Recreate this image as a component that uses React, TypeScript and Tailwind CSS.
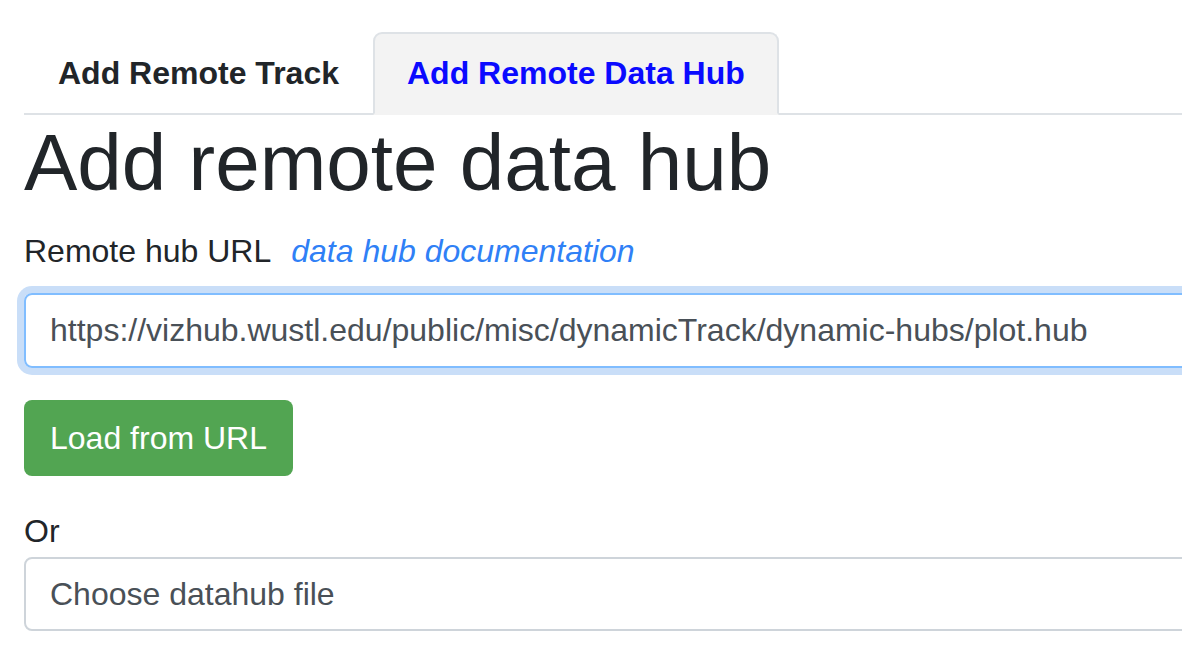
import React, { useState } from 'react';

const App: React.FC = () => {
  const [url, setUrl] = useState('https://vizhub.wustl.edu/public/misc/dynamicTrack/dynamic-hubs/plot.hub');

  return (
    <div className="w-[1182px] h-[654px] overflow-hidden bg-white font-['Liberation_Sans',Arial,sans-serif] text-[#212529] text-[32px] leading-[1.5]">
      <div className="w-[1400px] pl-[24px] pt-[32px]">
        {/* tabs */}
        <div className="flex border-b-2 border-[#dee2e6]">
          <div className="px-[32px] py-[16px] leading-[47px] border-2 border-transparent font-bold -mb-[2px]">
            Add Remote Track
          </div>
          <div className="px-[32px] py-[16px] leading-[47px] border-2 border-[#dee2e6] border-b-[#f3f3f3] bg-[#f3f3f3] rounded-t-[9px] font-bold text-[#0a0aff] -mb-[2px]">
            Add Remote Data Hub
          </div>
        </div>

        <h1 className="text-[80px] leading-[1.2] font-normal mb-[16px]">Add remote data hub</h1>

        <div className="mb-[18px] leading-[48px] flex items-baseline gap-[20px]">
          <span>Remote hub URL</span>
          <a className="italic text-[#2f80f6]">data hub documentation</a>
        </div>

        <input
          value={url}
          onChange={(e) => setUrl(e.target.value)}
          className="block w-[1300px] h-[75px] px-[24px] border-2 border-[#80bdff] rounded-[8px] text-[#495057] outline-none shadow-[0_0_0_7px_#c9def8]"
        />

        <button className="mt-[32px] h-[76px] px-[26px] rounded-[8px] bg-[#52a552] text-white">
          Load from URL
        </button>

        <div className="mt-[31px] leading-[48px]">Or</div>
        <div className="mt-[2px] w-[1300px] h-[74px] px-[24px] flex items-center border-2 border-[#ced4da] rounded-[8px] text-[#495057]">
          Choose datahub file
        </div>
      </div>
    </div>
  );
};

export default App;
